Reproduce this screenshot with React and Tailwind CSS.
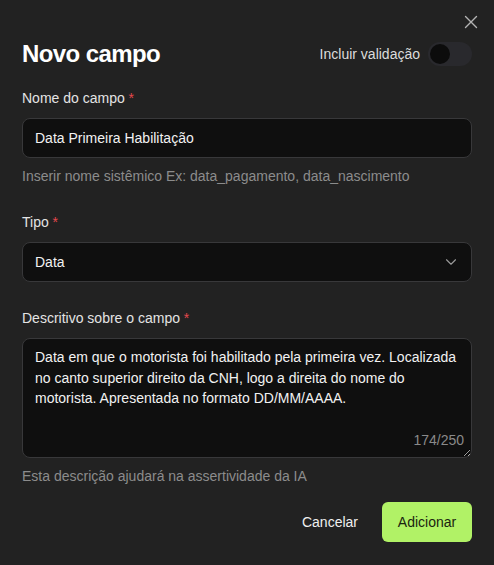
import { useState } from 'react';
import { ChevronDown } from 'lucide-react';

const Label = ({ children }) => (
    <label className="block text-sm text-[#e4e4e4] mb-[10px] leading-5">
        {children} <span className="text-[#e5484d]">*</span>
    </label>
);

export default function App() {
    const [name, setName] = useState('Data Primeira Habilitação');
    const [desc, setDesc] = useState(
        'Data em que o motorista foi habilitado pela primeira vez. Localizada no canto superior direito da CNH, logo a direita do nome do motorista. Apresentada no formato DD/MM/AAAA.'
    );
    const [validate, setValidate] = useState(false);

    return (
        <div
            className="relative w-[494px] h-[565px] bg-[#222222] text-[#ededed] px-[22px] pt-[40px]"
            style={{ fontFamily: '"Liberation Sans", Arial, sans-serif', colorScheme: 'dark' }}
        >
            <button className="absolute right-[14px] top-[13px] p-[1px] text-[#b4b4b4]">
                <svg width="16" height="16" viewBox="0 0 16 16" fill="none" stroke="currentColor" strokeWidth="1.4" strokeLinecap="round">
                    <path d="M2.5 2.5 13.5 13.5M13.5 2.5 2.5 13.5" />
                </svg>
            </button>

            <div className="flex items-center justify-between h-[28px]">
                <h2 className="text-2xl font-bold tracking-tight text-white">Novo campo</h2>
                <div className="flex items-center gap-2">
                    <span className="text-sm text-[#dcdcdc]">Incluir validação</span>
                    <button
                        onClick={() => setValidate(!validate)}
                        className={`w-[44px] h-[24px] rounded-full p-[2px] flex items-center transition ${validate ? 'bg-[#b1f266] justify-end' : 'bg-[#29292d] justify-start'}`}
                    >
                        <span className="block w-[20px] h-[20px] rounded-full bg-[#0c0c0c]" />
                    </button>
                </div>
            </div>

            <div className="mt-[20px]">
                <Label>Nome do campo</Label>
                <input
                    value={name}
                    onChange={(e) => setName(e.target.value)}
                    className="w-full h-[40px] px-3 rounded-lg bg-[#0f0f0f] border border-[#38383a] text-sm text-[#f2f2f2] outline-none"
                />
                <p className="text-sm text-[#8c8c8c] mt-[8px] leading-5">
                    Inserir nome sistêmico Ex: data_pagamento, data_nascimento
                </p>
            </div>

            <div className="mt-[26px]">
                <Label>Tipo</Label>
                <button className="w-full h-[40px] px-3 rounded-lg bg-[#0f0f0f] border border-[#38383a] text-sm text-[#f2f2f2] flex items-center justify-between">
                    <span>Data</span>
                    <ChevronDown size={18} strokeWidth={1.5} className="text-[#9a9a9a] -mr-[1px]" />
                </button>
            </div>

            <div className="mt-[26px]">
                <Label>Descritivo sobre o campo</Label>
                <div className="relative">
                    <textarea
                        value={desc}
                        onChange={(e) => setDesc(e.target.value)}
                        className="block w-full h-[120px] px-3 py-2 rounded-lg bg-[#0f0f0f] border border-[#38383a] text-sm leading-[20.5px] text-[#f2f2f2] outline-none resize-y"
                    />
                    <span className="absolute right-[8px] bottom-[8px] text-sm text-[#8a8a8a]">
                        {desc.length}/250
                    </span>
                </div>
                <p className="text-sm text-[#8c8c8c] mt-[8px] leading-5">
                    Esta descrição ajudará na assertividade da IA
                </p>
            </div>

            <div className="flex justify-end items-center gap-2 mt-[16px]">
                <button className="h-[40px] px-4 rounded-md text-sm text-[#f0f0f0]">Cancelar</button>
                <button className="h-[40px] w-[90px] rounded-md bg-[#b1f266] text-sm text-[#1b2410]">Adicionar</button>
            </div>
        </div>
    );
}
